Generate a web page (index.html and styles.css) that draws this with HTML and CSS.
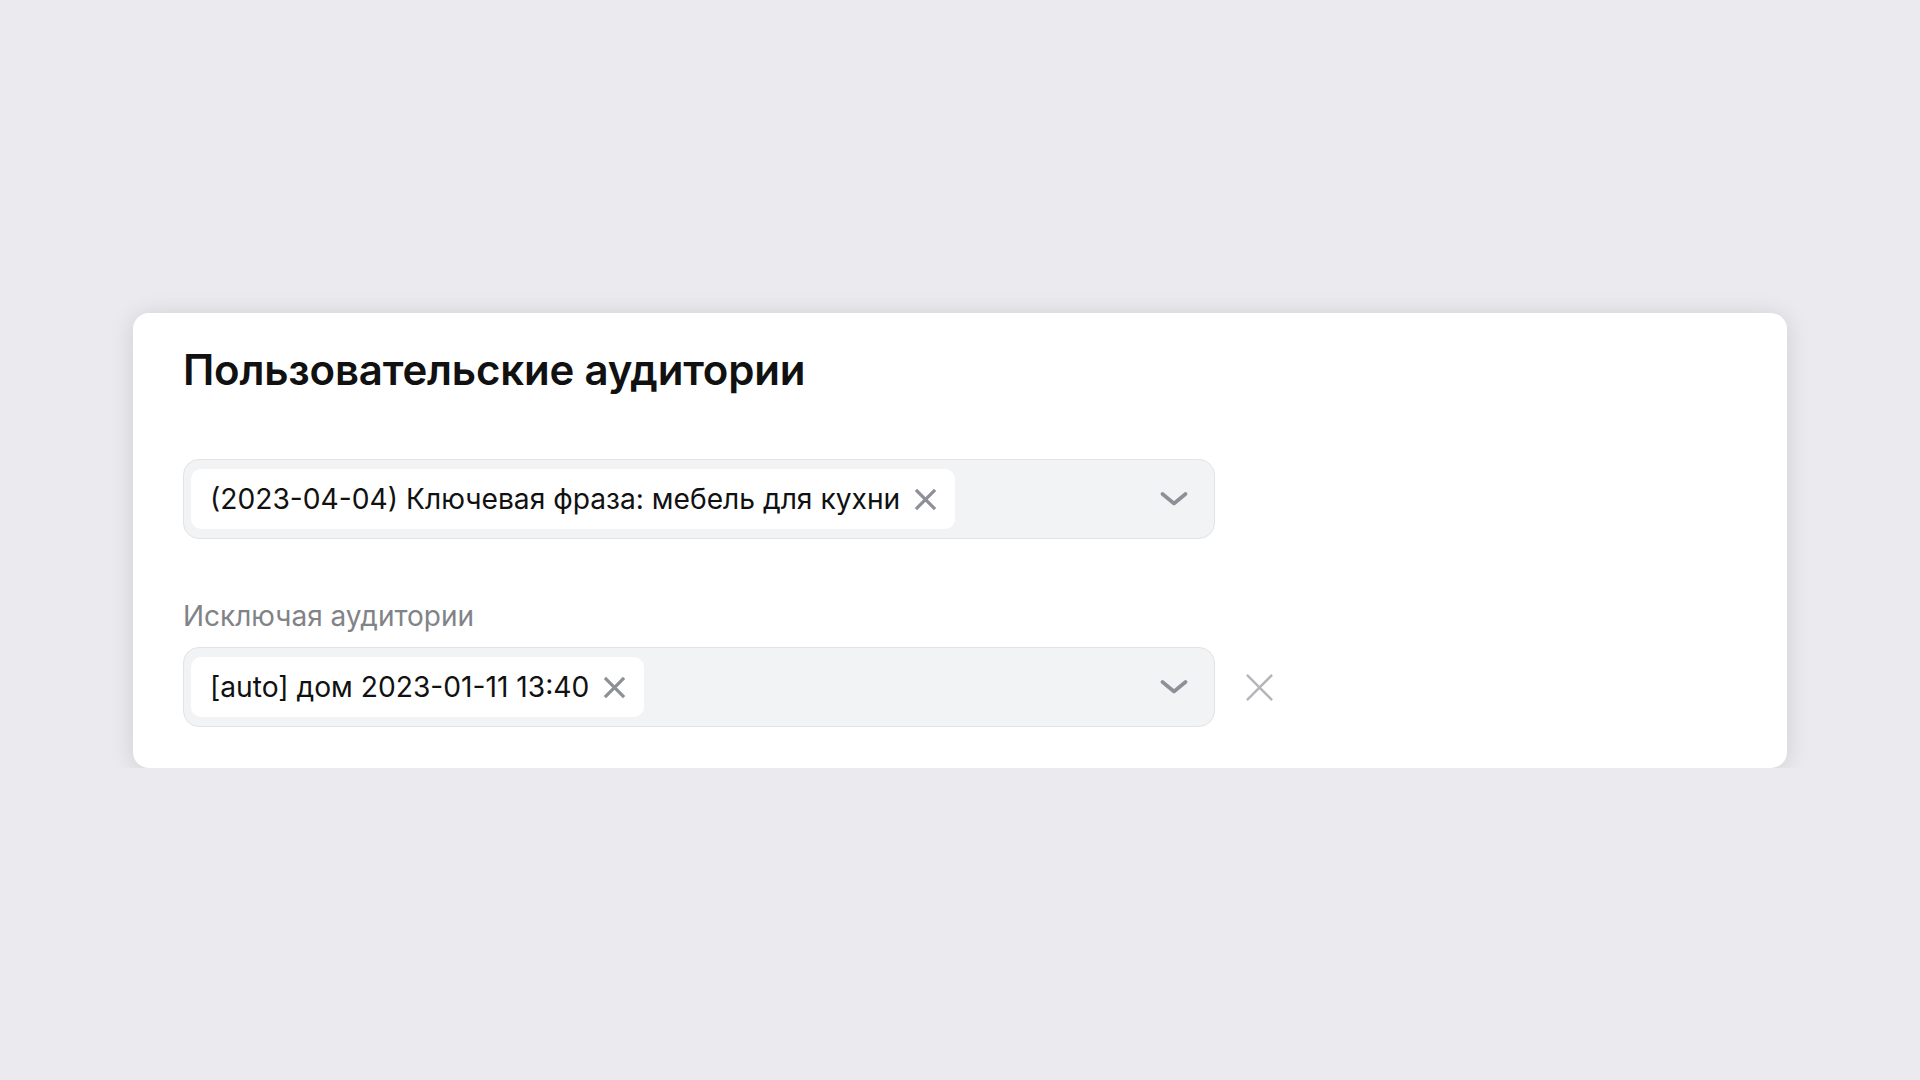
FILE: index.html
```html
<!DOCTYPE html>
<html>
<head>
    <title>Пользовательские аудитории</title>
    <link rel="stylesheet" href="styles.css">
</head>
<body>
    <div class="page">
        <div class="card">
            <h1 class="title">Пользовательские аудитории</h1>

            <div class="field field-first">
                <div class="select">
                    <div class="chip">
                        <span class="chip-text">(2023-04-04) Ключевая фраза: мебель для кухни</span>
                        <svg class="chip-remove" viewBox="0 0 24 24"><path d="M2 2 L22 22 M22 2 L2 22"/></svg>
                    </div>
                    <svg class="chevron" viewBox="0 0 28 16"><path d="M2.5 3 L14 12.5 L25.5 3"/></svg>
                </div>
            </div>

            <div class="label">Исключая аудитории</div>
            <div class="field">
                <div class="select">
                    <div class="chip">
                        <span class="chip-text">[auto] дом 2023-01-11 13:40</span>
                        <svg class="chip-remove" viewBox="0 0 24 24"><path d="M2 2 L22 22 M22 2 L2 22"/></svg>
                    </div>
                    <svg class="chevron" viewBox="0 0 28 16"><path d="M2.5 3 L14 12.5 L25.5 3"/></svg>
                </div>
                <svg class="field-remove" viewBox="0 0 30 30"><path d="M2 2 L28 28 M28 2 L2 28"/></svg>
            </div>
        </div>
    </div>
</body>
</html>
```

FILE: styles.css
```css
body {
    margin: 0;
    background-color: #ebebef;
    font-family: Inter, "Noto Sans", sans-serif;
    color: #111;
}

.page {
    padding: 313px 0 0 133px;
}

.card {
    width: 1654px;
    box-sizing: border-box;
    background-color: #fff;
    border-radius: 16px;
    box-shadow: 0 2px 24px rgba(0, 0, 0, 0.12);
    padding: 30px 50px 41px 50px;
}

.title {
    margin: 0;
    font-size: 42px;
    font-weight: 600;
    line-height: 53px;
    letter-spacing: -0.2px;
}

.field {
    display: flex;
    align-items: center;
    gap: 30px;
}

.field-first {
    margin-top: 63px;
    margin-bottom: 60px;
}

.select {
    width: 1032px;
    height: 80px;
    box-sizing: border-box;
    background-color: #f2f3f5;
    border: 1px solid #e2e3e7;
    border-radius: 16px;
    padding: 9px 26px 9px 7px;
    display: flex;
    align-items: center;
    justify-content: space-between;
}

.chip {
    height: 60px;
    box-sizing: border-box;
    background-color: #fff;
    border-radius: 10px;
    padding: 0 18px 0 19px;
    display: flex;
    align-items: center;
    gap: 14px;
}

.chip-text {
    font-size: 28.2px;
    color: #111;
}

.chip-remove {
    width: 23px;
    height: 23px;
}

.chip-remove path {
    stroke: #8d9096;
    stroke-width: 3.4;
    fill: none;
}

.chevron {
    width: 28px;
    height: 16px;
}

.chevron path {
    stroke: #8d9096;
    stroke-width: 3.6;
    fill: none;
    stroke-linecap: round;
    stroke-linejoin: round;
}

.label {
    font-size: 28px;
    color: #818388;
    margin-bottom: 14px;
}

.field-remove {
    width: 29px;
    height: 29px;
}

.field-remove path {
    stroke: #b4b6bb;
    stroke-width: 2.5;
    fill: none;
}
```
